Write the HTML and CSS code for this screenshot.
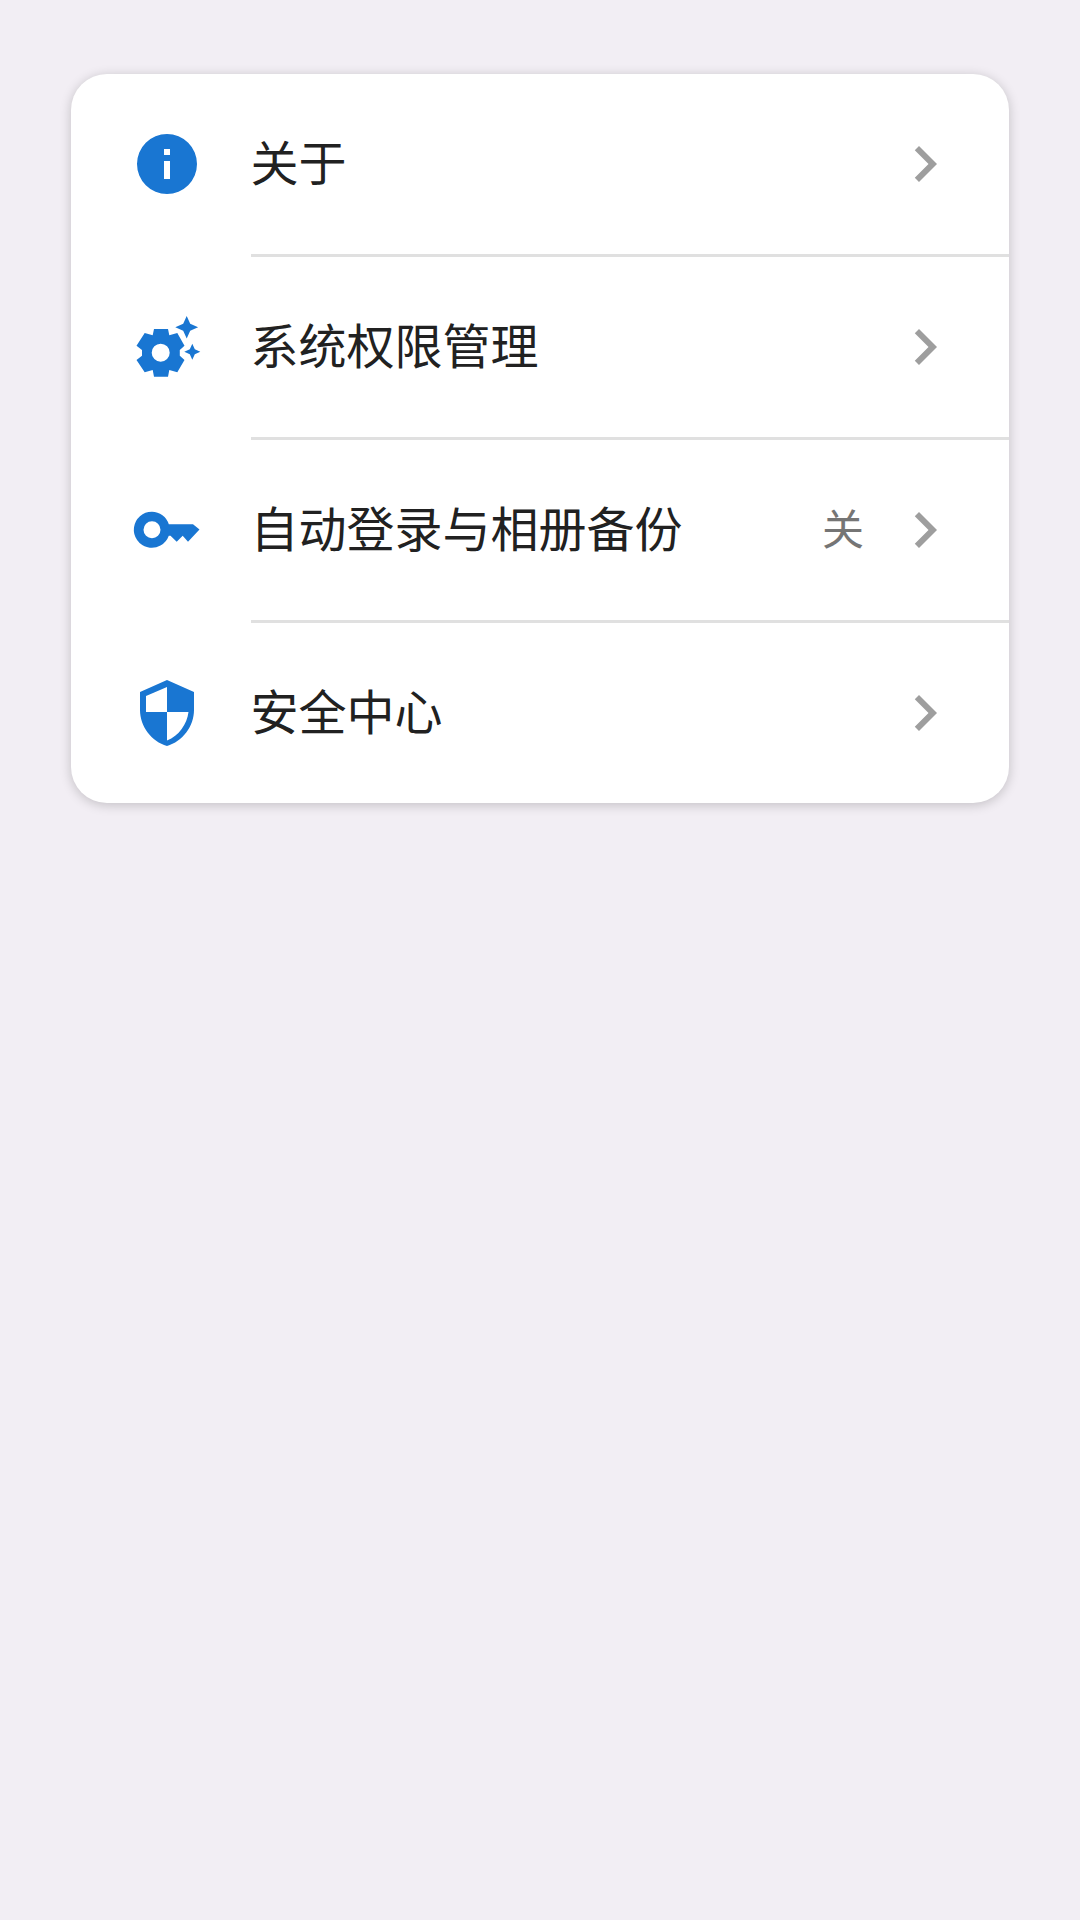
FILE: index.html
```html
<!DOCTYPE html>
<html lang="zh-CN">
<head>
<meta charset="utf-8">
<title>设置</title>
<link rel="stylesheet" href="styles.css">
</head>
<body>
<main class="page">
  <section class="card">
    <div class="row">
      <svg class="icon" viewBox="0 0 72 72"><path fill-rule="evenodd" d="M36 6a30 30 0 1 0 0 60 30 30 0 0 0 0-60zM33 33h6v18h-6zM33 21h6v6h-6z"/></svg>
      <span class="label">关于</span>
      <svg class="chevron" viewBox="0 0 24 24"><path d="M10 6 8.590 7.410 13.170 12l-4.580 4.590L10 18l6-6z"/></svg>
    </div>
    <div class="divider"></div>
    <div class="row">
      <svg class="icon" viewBox="0 0 72 72">
        <path fill-rule="evenodd" d="M23 18H37L38.300 24.300 46.300 22 53.500 34.700 48.800 39V44.700L53.500 49 46.300 61.300 38.300 59 37 65.700H23L21.700 59 13.700 61.300 5.500 49 11 44.700V39L5.500 34.700 13.700 22 21.700 24.300zM29.700 32.700a9 9 0 1 0 0 18 9 9 0 0 0 0-18z"/>
        <path d="M55.700 5l3.500 7.800 7.900 3.500-7.900 3.500-3.500 7.800-3.500-7.800-7.900-3.500 7.900-3.500z"/>
        <path d="M61.300 32.700l2.500 5.500 5.500 2.500-5.500 2.500-2.500 5.500-2.500-5.500-5.500-2.500 5.500-2.500z"/>
      </svg>
      <span class="label">系统权限管理</span>
      <svg class="chevron" viewBox="0 0 24 24"><path d="M10 6 8.590 7.410 13.170 12l-4.580 4.590L10 18l6-6z"/></svg>
    </div>
    <div class="divider"></div>
    <div class="row">
      <svg class="icon" viewBox="0 0 72 72"><path fill-rule="evenodd" d="M21 17.700a18 18 0 1 0 16.800 24L39.500 41.700 45.700 47.700 51.700 41.700 57 47.700 68.500 35.500 62 30.300H37.800A18 18 0 0 0 21 17.700zM21 27.200a8.500 8.500 0 1 1 0 17 8.500 8.500 0 0 1 0-17z"/></svg>
      <span class="label">自动登录与相册备份</span>
      <span class="value">关</span>
      <svg class="chevron" viewBox="0 0 24 24"><path d="M10 6 8.590 7.410 13.170 12l-4.580 4.590L10 18l6-6z"/></svg>
    </div>
    <div class="divider"></div>
    <div class="row">
      <svg class="icon" viewBox="0 0 72 72"><path fill-rule="evenodd" d="M36 3 9 15v18c0 16.500 11.500 31.500 27 36 15.500-4.500 27-19.500 27-36V15zM36 10v25H15V19zM36 35h21.500C56 47 48 59 36 63.500z"/></svg>
      <span class="label">安全中心</span>
      <svg class="chevron" viewBox="0 0 24 24"><path d="M10 6 8.590 7.410 13.170 12l-4.580 4.590L10 18l6-6z"/></svg>
    </div>
  </section>
</main>
</body>
</html>
```
FILE: styles.css
```css
* { box-sizing: border-box; }
html, body { margin: 0; height: 100%; }
body {
  background: #f2eef4;
  font-family: "Noto Sans CJK SC", "Noto Sans", sans-serif;
}
.page { padding: 74px 71px 0; min-height: 1920px; }
.card {
  background: #fff;
  border-radius: 36px;
  box-shadow: 0 2px 12px rgba(0, 0, 0, 0.2);
  overflow: hidden;
}
.row {
  display: flex;
  align-items: center;
  height: 180px;
  padding: 0 48px 0 60px;
}
.icon { width: 72px; height: 72px; flex: none; fill: #1976d2; margin-right: 47.5px; }
.label { flex: 1; font-size: 48px; line-height: 1; color: #212121; padding-bottom: 8px; }
.value { font-size: 42px; line-height: 1; color: #757575; margin-right: 25px; padding-bottom: 6px; }
.chevron { width: 72px; height: 72px; flex: none; fill: #9e9e9e; }
.divider { height: 3px; margin-left: 180px; background: #e0e0e0; }
```
